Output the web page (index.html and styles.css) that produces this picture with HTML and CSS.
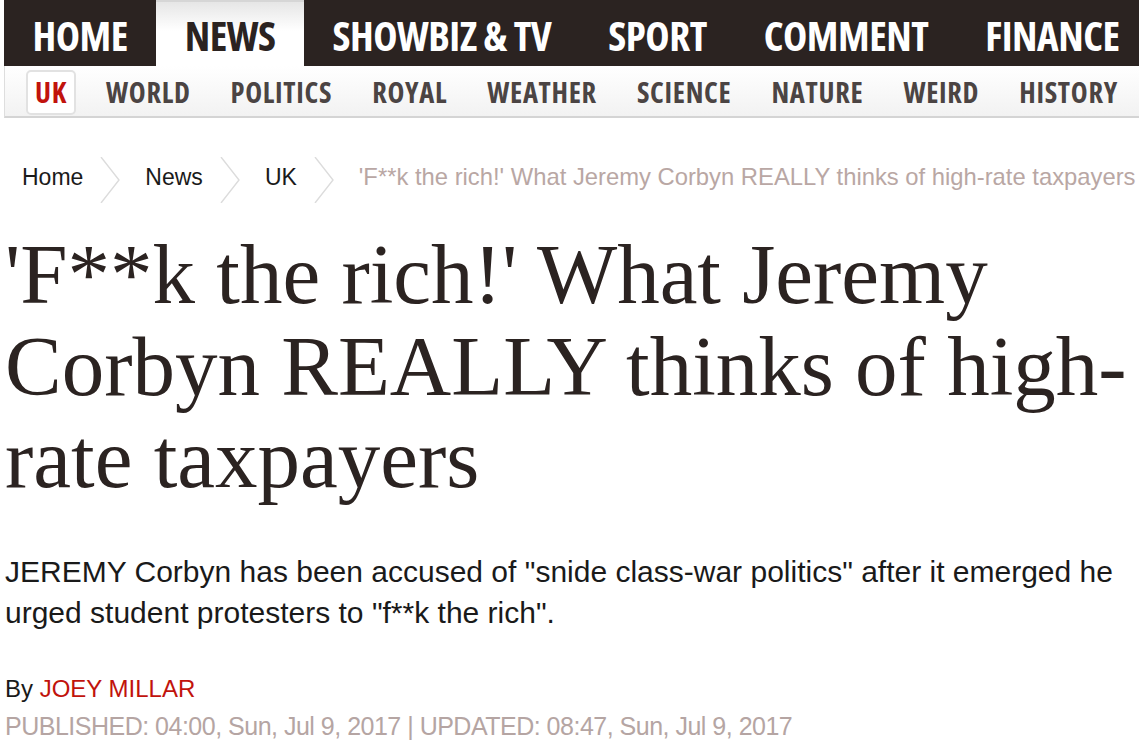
FILE: index.html
```html
<!DOCTYPE html>
<html lang="en">

<head>
  <meta charset="UTF-8">
  <title>'F**k the rich!' What Jeremy Corbyn REALLY thinks of high-rate taxpayers</title>
  <link rel="stylesheet" href="styles.css">
</head>

<body>
  <header class="site-header">
    <nav class="main-nav">
      <a class="main-link">HOME</a>
      <a class="main-link active">NEWS</a>
      <a class="main-link">SHOWBIZ &amp; TV</a>
      <a class="main-link">SPORT</a>
      <a class="main-link">COMMENT</a>
      <a class="main-link">FINANCE</a>
    </nav>
    <nav class="sub-nav">
      <a class="sub-link active">UK</a>
      <a class="sub-link">WORLD</a>
      <a class="sub-link">POLITICS</a>
      <a class="sub-link">ROYAL</a>
      <a class="sub-link">WEATHER</a>
      <a class="sub-link">SCIENCE</a>
      <a class="sub-link">NATURE</a>
      <a class="sub-link">WEIRD</a>
      <a class="sub-link">HISTORY</a>
    </nav>
  </header>

  <main class="article">
    <ol class="breadcrumb">
      <li class="crumb">Home</li>
      <li class="crumb-sep"><svg viewBox="0 0 20 46" width="20" height="46"><polyline points="1,0 19,23 1,46" fill="none" stroke="#dcdcdc" stroke-width="1.4"/></svg></li>
      <li class="crumb">News</li>
      <li class="crumb-sep"><svg viewBox="0 0 20 46" width="20" height="46"><polyline points="1,0 19,23 1,46" fill="none" stroke="#dcdcdc" stroke-width="1.4"/></svg></li>
      <li class="crumb">UK</li>
      <li class="crumb-sep"><svg viewBox="0 0 20 46" width="20" height="46"><polyline points="1,0 19,23 1,46" fill="none" stroke="#dcdcdc" stroke-width="1.4"/></svg></li>
      <li class="crumb current">'F**k the rich!' What Jeremy Corbyn REALLY thinks of high-rate taxpayers</li>
    </ol>

    <h1 class="headline">'F**k the rich!' What Jeremy Corbyn REALLY thinks of high-rate taxpayers</h1>

    <p class="standfirst">JEREMY Corbyn has been accused of "snide class-war politics" after it emerged he urged student protesters to "f**k the rich".</p>

    <div class="meta">
      <div class="byline">By <span class="author">JOEY MILLAR</span></div>
      <div class="dates">PUBLISHED: 04:00, Sun, Jul 9, 2017 | UPDATED: 08:47, Sun, Jul 9, 2017</div>
    </div>
  </main>
</body>

</html>
```

FILE: styles.css
```css
body {
  margin: 0;
  background-color: #ffffff;
  color: #1a1a1a;
  font-family: 'Liberation Sans', Arial, sans-serif;
  overflow: hidden;
}

.site-header {
  margin-left: 4px;
}

.main-nav {
  display: flex;
  height: 66px;
  background-color: #2b2321;
}

.main-link {
  display: flex;
  align-items: center;
  padding: 3px 28.5px 0;
  color: #ffffff;
  font-family: 'Open Sans', sans-serif;
  font-stretch: 75%;
  font-weight: 700;
  font-size: 41px;
  letter-spacing: -0.5px;
  white-space: nowrap;
}

.main-link.active {
  color: #2b2321;
  padding-top: 1px;
  border-top: 2px solid #d6d6d6;
  background: linear-gradient(#e6e6e6, #ffffff 45%);
}

.sub-nav {
  display: flex;
  align-items: center;
  height: 50px;
  padding-left: 11px;
  border-left: 1px solid #dedede;
  border-bottom: 2px solid #d4d4d4;
  background: linear-gradient(#ffffff, #f2f2f2);
}

.sub-link {
  display: flex;
  align-items: center;
  height: 45px;
  box-sizing: border-box;
  margin: 2px 10px 0;
  padding: 0 9px;
  border: 1px solid transparent;
  border-radius: 5px;
  color: #4b4443;
  font-family: 'Open Sans', sans-serif;
  font-stretch: 75%;
  font-weight: 700;
  font-size: 28.5px;
  letter-spacing: 0.7px;
}

.sub-link.active {
  color: #c1130c;
  background-color: #ffffff;
  border: 2px solid #e2e2e2;
  padding: 0 7px;
}

.article {
  padding-left: 5px;
}

.breadcrumb {
  display: flex;
  align-items: center;
  list-style: none;
  margin: 39px 0 0;
  padding: 0 0 0 17px;
  height: 46px;
  white-space: nowrap;
}

.crumb {
  font-size: 23px;
  color: #1a1a1a;
  margin-top: -6px;
}

.crumb-sep {
  display: flex;
  margin: 0 25px 0 17px;
}

.crumb.current {
  font-size: 23.8px;
  color: #b9a7a4;
}

.headline {
  margin: 25px 0 0;
  font-family: 'Liberation Serif', 'Times New Roman', serif;
  font-weight: 400;
  font-size: 85px;
  line-height: 92px;
  color: #2b2321;
}

.standfirst {
  margin: 47px 0 0;
  font-size: 30px;
  line-height: 41px;
  color: #1a1a1a;
}

.meta {
  margin-top: 37px;
}

.byline {
  font-size: 24px;
  line-height: 37px;
  color: #1a1a1a;
}

.author {
  color: #c1130c;
}

.dates {
  font-size: 25px;
  line-height: 38px;
  letter-spacing: -0.5px;
  color: #b5a5a3;
}
```
